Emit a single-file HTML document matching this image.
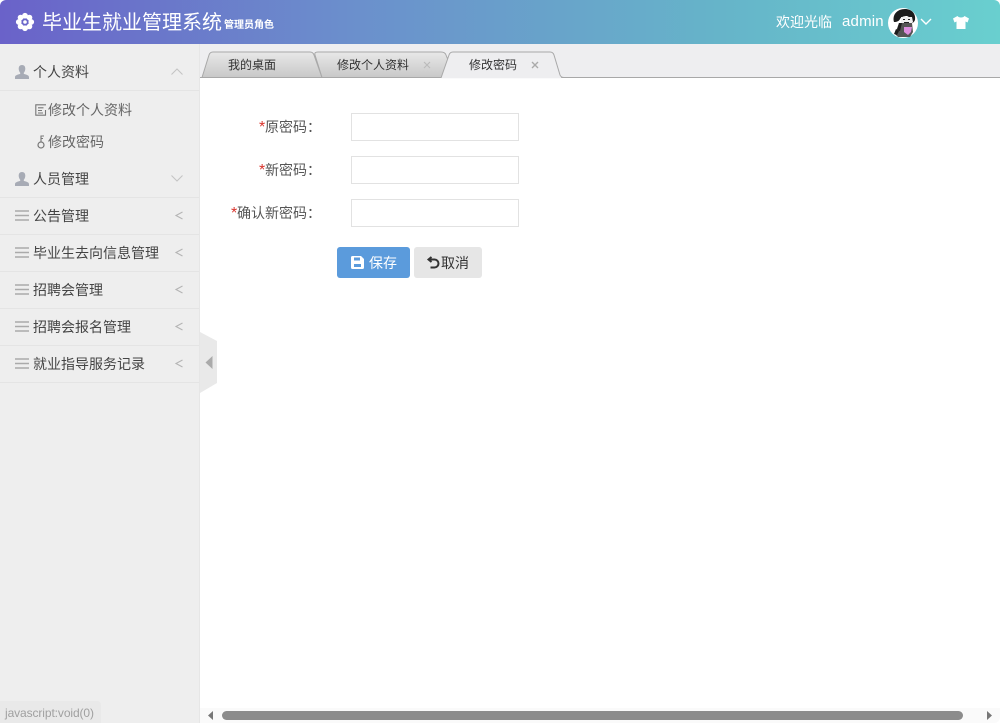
<!DOCTYPE html>
<html lang="zh"><head><meta charset="utf-8"><title>毕业生就业管理系统</title>
<style>
*{box-sizing:border-box}
html,body{margin:0;padding:0;width:1000px;height:723px;overflow:hidden;background:#fff;font-family:"Liberation Sans","Noto Sans CJK SC",sans-serif}
.a{position:absolute;white-space:nowrap}
#hd{left:0;top:0;width:1000px;height:44px;background:linear-gradient(90deg,#6a62c9 0%,#6b8fcc 35%,#66b4c9 72%,#69cfcf 100%);border-radius:6px 6px 0 0}
#side{left:0;top:44px;width:200px;height:679px;background:#eeeeee;border-right:1px solid #e6e6e6}
.row{left:0;width:199px;height:37px;border-bottom:1px solid #e4e4e4}
.t{font-size:14px;line-height:20px;color:#444}
.sub{font-size:14px;line-height:20px;color:#666}
.lb{font-size:14px;line-height:20px;color:#555;text-align:right;width:120px;left:201px}
.lb b{color:#d9332c;font-weight:400;font-size:16px;display:inline-block;width:6px;text-align:left;line-height:14px}
.ip{left:351px;width:168px;height:28px;border:1px solid #e2e2e2;background:#fff}
svg{position:absolute;overflow:visible}
.tb{font-size:12px;line-height:16px;color:#333}
</style></head><body>
<div class="a" id="hd"></div>
<svg style="left:15px;top:12px" width="20" height="20" viewBox="0 0 20 20"><g fill="#fff"><circle cx="10" cy="3.800" r="2.900"/><circle cx="10" cy="16.200" r="2.900"/><circle cx="3.800" cy="10" r="2.900"/><circle cx="16.200" cy="10" r="2.900"/><circle cx="5.600" cy="5.600" r="2.900"/><circle cx="14.400" cy="5.600" r="2.900"/><circle cx="5.600" cy="14.400" r="2.900"/><circle cx="14.400" cy="14.400" r="2.900"/></g><circle cx="10" cy="10" r="3.600" fill="#6a66c9"/><circle cx="10" cy="10" r="1.800" fill="#fff"/></svg>
<div class="a" style="left:42px;top:9px;font-size:20px;line-height:28px;color:#fff">毕业生就业管理系统</div>
<div class="a" style="left:224px;top:18px;font-size:10px;line-height:16px;color:#fff;font-weight:700">管理员角色</div>
<div class="a" style="left:776px;top:12px;font-size:14px;line-height:20px;color:#fff">欢迎光临</div>
<div class="a" style="left:842px;top:12px;font-size:15px;line-height:20px;color:#fff;letter-spacing:.2px">admin</div>
<svg style="left:888px;top:8px" width="30" height="30" viewBox="0 0 30 30"><circle cx="15" cy="15" r="15" fill="#fff"/><path d="M6 14C4 7 9 1 17 1c7 0 11 5 10 11-1 2-2 3-3 3 0-3-2-6-5-7-3 0-6 1-7 3-1 2-3 3-6 3z" fill="#1c1c1c"/><path d="M13 9h11l1 5-3 3h-7l-2-3z" fill="#f0f0f0"/><path d="M15 11.500h2M20 11.500h2M16 14.500h5" stroke="#222" stroke-width="1"/><path d="M11 15h13l1 9-3 5H10L7 26z" fill="#555"/><path d="M8 21l-2 5 3 1 2-4zM11 15l3 0-2 8-3-1z" fill="#1c1c1c"/><path d="M16 19h8l-1 5-3 3-4-3z" fill="#dc8ede"/></svg>
<svg style="left:920px;top:18px" width="12" height="8" viewBox="0 0 12 8"><path d="M1 1l5 5 5-5" fill="none" stroke="#fff" stroke-width="1.400"/></svg>
<svg style="left:952px;top:15px" width="18" height="15" viewBox="0 0 18 15"><path d="M5.500 1L1 3.500 2.500 7.500 4.500 6.500V14H13.500V6.500L15.500 7.500 17 3.500 12.500 1C11.500 3 6.500 3 5.500 1z" fill="#fff"/></svg>
<div class="a" style="left:696px;top:44px;width:2px;height:1px;background:#c8c8c8"></div>

<div class="a" id="side"></div>
<div class="a row" style="top:44px;height:47px"></div>
<div class="a row" style="top:161px"></div>
<div class="a row" style="top:198px"></div>
<div class="a row" style="top:235px"></div>
<div class="a row" style="top:272px"></div>
<div class="a row" style="top:309px"></div>
<div class="a row" style="top:346px"></div>

<svg style="left:15px;top:65px" width="14" height="14" viewBox="0 0 14 14"><path d="M7 0c2.200 0 3.300 1.500 3.300 3.700 0 1.700-.8 3.300-1.500 4v1.200c2 .8 5.200 1 5.200 3.300V14H0v-1.800c0-2.300 3.200-2.500 5.200-3.300V7.700C4.500 7 3.700 5.400 3.700 3.700 3.700 1.500 4.800 0 7 0z" fill="#a7abb5"/></svg>
<div class="a t" style="left:33px;top:62px">个人资料</div>
<svg style="left:171px;top:68px" width="12" height="7" viewBox="0 0 12 7"><path d="M.5 6.500L6 1l5.500 5.500" fill="none" stroke="#c4c4c4" stroke-width="1.100"/></svg>

<svg style="left:35px;top:104px" width="12" height="12" viewBox="0 0 12 12"><path d="M11 .8H.8v10.400h9.700V6M3 3.800h5.500M3 6.500h4M3 9h5" fill="none" stroke="#777" stroke-width="1.100"/></svg>
<div class="a sub" style="left:48px;top:100px">修改个人资料</div>
<svg style="left:36px;top:135px" width="10" height="15" viewBox="0 0 10 15"><circle cx="5" cy="10" r="3" fill="none" stroke="#777" stroke-width="1.200"/><path d="M5 7V1h3M5 3.500h2" fill="none" stroke="#777" stroke-width="1.100"/></svg>
<div class="a sub" style="left:48px;top:132px">修改密码</div>

<svg style="left:15px;top:172px" width="14" height="14" viewBox="0 0 14 14"><path d="M7 0c2.200 0 3.300 1.500 3.300 3.700 0 1.700-.8 3.300-1.500 4v1.200c2 .8 5.200 1 5.200 3.300V14H0v-1.800c0-2.300 3.200-2.500 5.200-3.300V7.700C4.500 7 3.700 5.400 3.700 3.700 3.700 1.500 4.800 0 7 0z" fill="#a7abb5"/></svg>
<div class="a t" style="left:33px;top:169px">人员管理</div>
<svg style="left:171px;top:175px" width="12" height="7" viewBox="0 0 12 7"><path d="M.5.500L6 6l5.500-5.500" fill="none" stroke="#c4c4c4" stroke-width="1.100"/></svg>

<svg style="left:15px;top:210px" width="14" height="11" viewBox="0 0 14 11"><path d="M0 1h14M0 5.500h14M0 10h14" stroke="#aaa" stroke-width="1.600"/></svg>
<div class="a t" style="left:33px;top:206px">公告管理</div>
<svg style="left:175px;top:211px" width="8" height="9" viewBox="0 0 8 9"><path d="M7.500 1L1 4.500 7.500 8" fill="none" stroke="#b4b4b4" stroke-width="1.100"/></svg>

<svg style="left:15px;top:247px" width="14" height="11" viewBox="0 0 14 11"><path d="M0 1h14M0 5.500h14M0 10h14" stroke="#aaa" stroke-width="1.600"/></svg>
<div class="a t" style="left:33px;top:243px">毕业生去向信息管理</div>
<svg style="left:175px;top:248px" width="8" height="9" viewBox="0 0 8 9"><path d="M7.500 1L1 4.500 7.500 8" fill="none" stroke="#b4b4b4" stroke-width="1.100"/></svg>

<svg style="left:15px;top:284px" width="14" height="11" viewBox="0 0 14 11"><path d="M0 1h14M0 5.500h14M0 10h14" stroke="#aaa" stroke-width="1.600"/></svg>
<div class="a t" style="left:33px;top:280px">招聘会管理</div>
<svg style="left:175px;top:285px" width="8" height="9" viewBox="0 0 8 9"><path d="M7.500 1L1 4.500 7.500 8" fill="none" stroke="#b4b4b4" stroke-width="1.100"/></svg>

<svg style="left:15px;top:321px" width="14" height="11" viewBox="0 0 14 11"><path d="M0 1h14M0 5.500h14M0 10h14" stroke="#aaa" stroke-width="1.600"/></svg>
<div class="a t" style="left:33px;top:317px">招聘会报名管理</div>
<svg style="left:175px;top:322px" width="8" height="9" viewBox="0 0 8 9"><path d="M7.500 1L1 4.500 7.500 8" fill="none" stroke="#b4b4b4" stroke-width="1.100"/></svg>

<svg style="left:15px;top:358px" width="14" height="11" viewBox="0 0 14 11"><path d="M0 1h14M0 5.500h14M0 10h14" stroke="#aaa" stroke-width="1.600"/></svg>
<div class="a t" style="left:33px;top:354px">就业指导服务记录</div>
<svg style="left:175px;top:359px" width="8" height="9" viewBox="0 0 8 9"><path d="M7.500 1L1 4.500 7.500 8" fill="none" stroke="#b4b4b4" stroke-width="1.100"/></svg>

<svg style="left:200px;top:332px" width="17" height="62" viewBox="0 0 17 62"><path d="M0 0L17 9V51L0 61z" fill="#e9e9e9"/><path d="M12.500 24v13L5.500 30.500z" fill="#aaa"/></svg>

<div class="a" style="left:200px;top:44px;width:800px;height:34px;background:#eeeef0"></div>
<svg style="left:200px;top:44px" width="800" height="35" viewBox="0 0 800 35">
<defs><linearGradient id="g" x1="0" y1="0" x2="0" y2="1"><stop offset="0" stop-color="#e8e8e8"/><stop offset="1" stop-color="#c8c8c8"/></linearGradient></defs>
<path d="M0 33.500H800" stroke="#a8a8a8" stroke-width="1"/>
<path d="M2 33.500L9 11Q10 8 13 8H110Q113 8 114 11L122 33.500z" fill="url(#g)" stroke="#a8a8a8"/>
<path d="M122 33.500L115 11Q114 8 118 8H241Q245 8 246 11L248 16 242 33.500z" fill="url(#g)" stroke="#a8a8a8"/>
<path d="M241 34L249 11Q250 8 253 8H350Q353 8 354 11L360 31Q361 33.500 364 33.500" fill="#eeeef0" stroke="#a8a8a8"/>
<path d="M242 33.500H361" stroke="#eeeef0" stroke-width="1.500"/>
</svg>
<div class="a tb" style="left:228px;top:57px">我的桌面</div>
<div class="a tb" style="left:337px;top:57px">修改个人资料</div>
<div class="a tb" style="left:469px;top:57px">修改密码</div>
<svg style="left:423px;top:61px" width="8" height="8" viewBox="0 0 8 8"><path d="M1 1l6 6M7 1L1 7" stroke="#bbb" stroke-width="1.200"/></svg>
<svg style="left:531px;top:61px" width="8" height="8" viewBox="0 0 8 8"><path d="M1 1l6 6M7 1L1 7" stroke="#aaa" stroke-width="1.400"/></svg>

<div class="a lb" style="top:117px"><b>*</b>原密码：</div>
<div class="a lb" style="top:160px"><b>*</b>新密码：</div>
<div class="a lb" style="top:203px"><b>*</b>确认新密码：</div>
<div class="a ip" style="top:113px"></div>
<div class="a ip" style="top:156px"></div>
<div class="a ip" style="top:199px"></div>

<div class="a" style="left:337px;top:247px;width:73px;height:31px;background:#5b9bdc;border-radius:3px"></div>
<svg style="left:351px;top:256px" width="13" height="13" viewBox="0 0 13 13"><path d="M1.500 0H10L13 3V11.500Q13 13 11.500 13H1.500Q0 13 0 11.500V1.500Q0 0 1.500 0z" fill="#fff"/><rect x="3" y="1.500" width="6" height="3" fill="#5b9bdc"/><rect x="3" y="8" width="7" height="3" fill="#5b9bdc"/></svg>
<div class="a" style="left:369px;top:253px;font-size:14px;line-height:20px;color:#fff">保存</div>
<div class="a" style="left:414px;top:247px;width:68px;height:31px;background:#e6e6e6;border-radius:3px"></div>
<svg style="left:427px;top:256px" width="13" height="13" viewBox="0 0 13 13"><path d="M4.500 1L1.500 3.500 4.500 6M1.500 3.500H7.500A3.900 3.900 0 0 1 7.500 11.500H3.500" fill="none" stroke="#333" stroke-width="2"/></svg>
<div class="a" style="left:441px;top:253px;font-size:14px;line-height:20px;color:#333">取消</div>

<div class="a" style="left:200px;top:708px;width:800px;height:15px;background:#fafafa;border-radius:0 0 6px 0"></div>
<svg style="left:207px;top:711px" width="7" height="9" viewBox="0 0 7 9"><path d="M6 0v9L1 4.500z" fill="#777"/></svg>
<div class="a" style="left:222px;top:711px;width:741px;height:9px;background:#8c8c8c;border-radius:5px"></div>
<svg style="left:986px;top:711px" width="7" height="9" viewBox="0 0 7 9"><path d="M1 0v9l5-4.500z" fill="#777"/></svg>

<div class="a" style="left:0;top:701px;width:101px;height:22px;background:#e9e9e9;border-radius:0 4px 0 0"></div>
<div class="a" style="left:5px;top:705px;font-size:12px;line-height:16px;color:#a0a0a0;letter-spacing:-.1px">javascript:void(0)</div>
</body></html>
